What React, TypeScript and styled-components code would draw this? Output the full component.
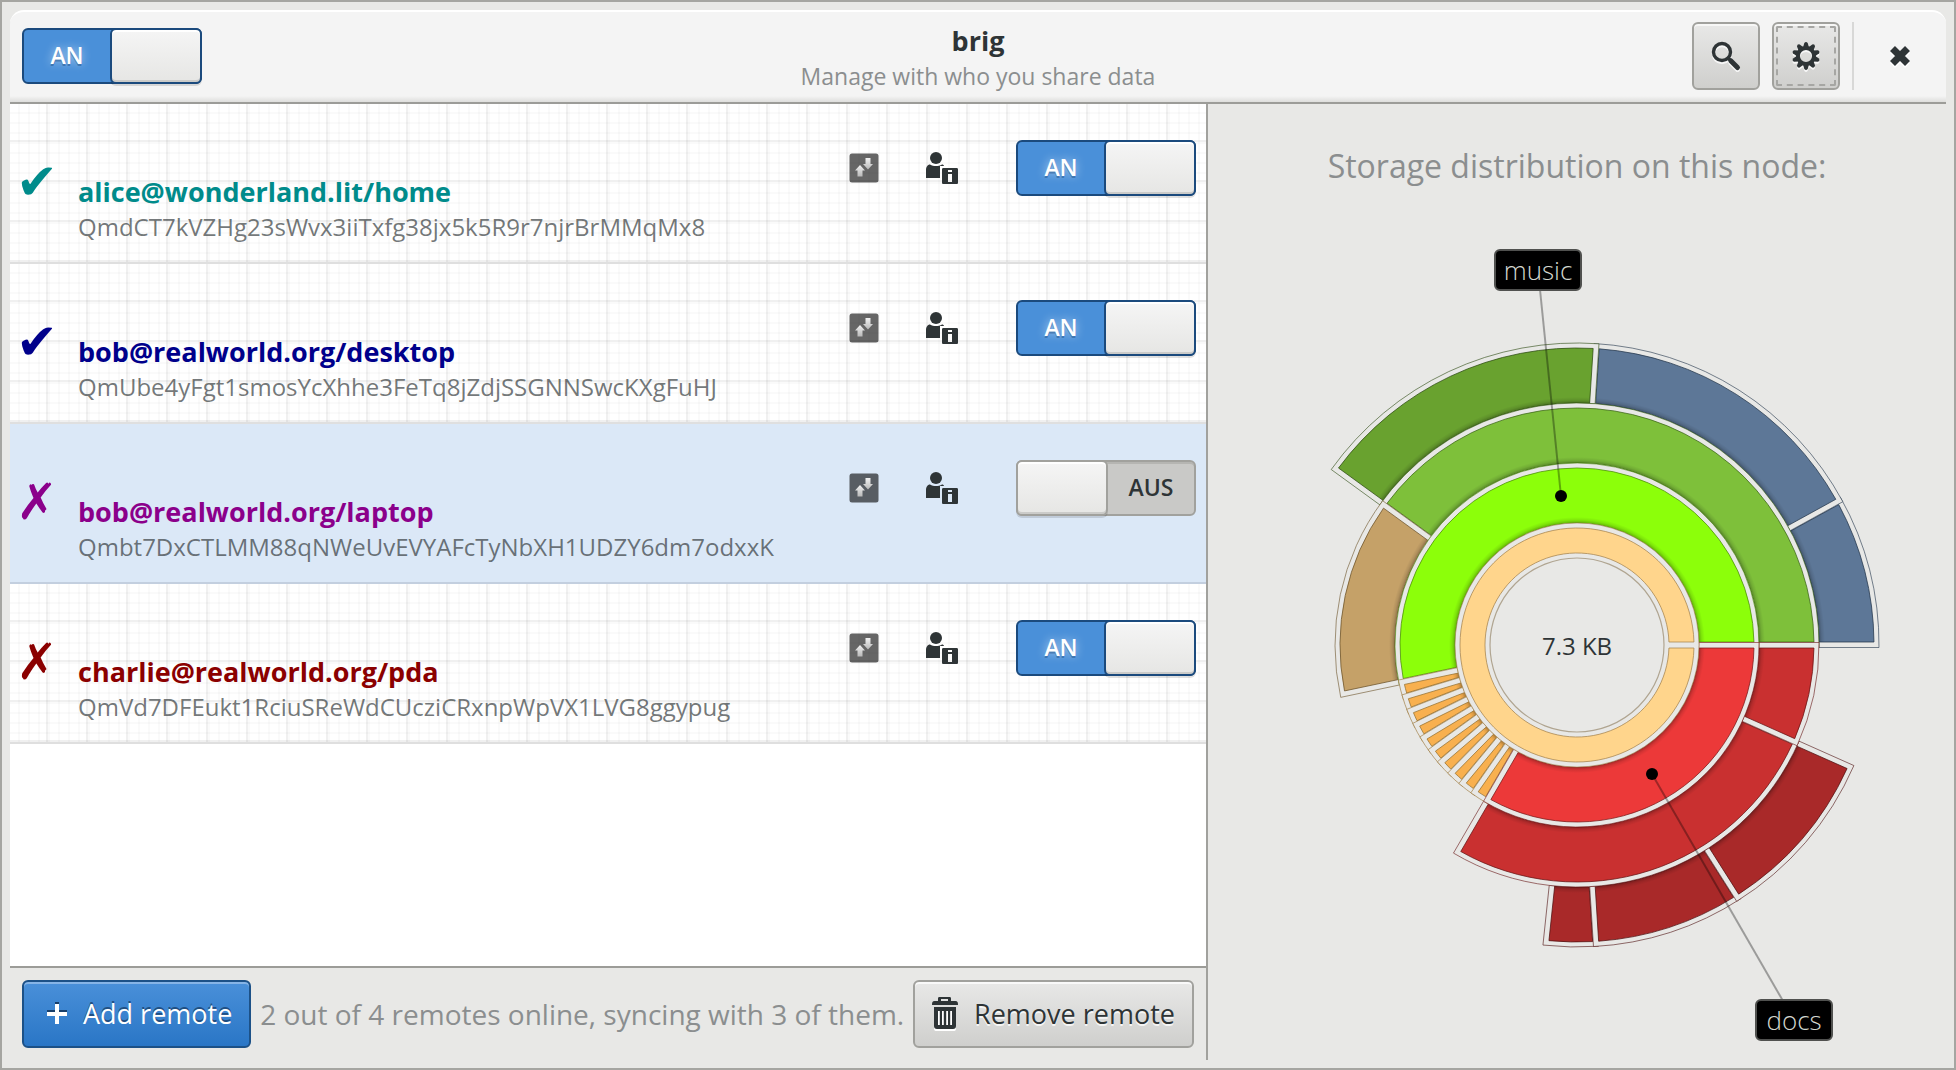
import React from "react";
import styled, { createGlobalStyle } from "styled-components";

const INK = "#2e3436";
const SURFACE = "#e8e8e6";
const LINE = "#a1a19d";

const GlobalStyle = createGlobalStyle`
  * { box-sizing: border-box; }
  body { margin: 0; background: ${SURFACE}; }
  body, button, input { font-family: "Open Sans", "Noto Sans", sans-serif; color: ${INK}; }
`;

const Window = styled.div`
  display: flex;
  flex-direction: column;
  min-height: 100vh;
  padding: 8px;
  border: 2px solid #a5a5a1;
  background: ${SURFACE};
`;

const HeaderBar = styled.header`
  display: grid;
  grid-template-columns: 1fr auto 1fr;
  align-items: center;
  height: 94px;
  padding: 0 12px 2px;
  border-top: 2px solid #ffffff;
  border-bottom: 2px solid #9c9c98;
  border-radius: 14px 14px 0 0;
  background: linear-gradient(to top, #dededc 0, #f4f4f4 6px);
`;

const TitleBlock = styled.div`
  display: flex;
  flex-direction: column;
  align-items: center;
  padding-top: 4px;
`;

const Title = styled.h1`
  margin: 0;
  font-size: 27px;
  line-height: 36px;
  font-weight: 700;
`;

const Subtitle = styled.p`
  margin: 0;
  color: #8b8e8f;
  font-size: 23px;
  line-height: 34px;
`;

const HeaderActions = styled.div`
  display: flex;
  justify-content: flex-end;
  gap: 12px;
`;

const IconButton = styled.button<{ $focused?: boolean; $flat?: boolean }>`
  display: flex;
  align-items: center;
  justify-content: center;
  width: 68px;
  height: 68px;
  padding: 0;
  border: 2px solid ${(p) => (p.$flat ? "transparent" : LINE)};
  border-radius: 6px;
  background: ${(p) => (p.$flat ? "none" : "linear-gradient(#e8e8e7, #cfcfcd)")};
  box-shadow: ${(p) => (p.$flat ? "none" : "inset 0 2px #f7f7f6")};
  outline: ${(p) => (p.$focused ? "2px dashed #a6a6a3" : "none")};
  outline-offset: -6px;
`;

const Separator = styled.span`
  width: 2px;
  background: #d8d8d7;
`;

const SwitchBox = styled.label<{ $on: boolean }>`
  display: flex;
  align-items: center;
  justify-content: ${(p) => (p.$on ? "flex-start" : "flex-end")};
  position: relative;
  width: 180px;
  height: 56px;
  border: 2px solid ${(p) => (p.$on ? "#1b4a7d" : LINE)};
  border-radius: 6px;
  background: ${(p) => (p.$on ? "#4a90d9" : "#c9c9c7")};
  box-shadow: ${(p) => (p.$on ? "none" : "inset 0 2px #b5b5b2")};
`;

const SwitchInput = styled.input`
  position: absolute;
  inset: 0;
  width: 100%;
  height: 100%;
  margin: 0;
  opacity: 0;
`;

const SwitchText = styled.span<{ $on: boolean }>`
  width: 86px;
  padding-bottom: 2px;
  text-align: center;
  font-size: 23px;
  line-height: 32px;
  font-weight: 600;
  color: ${(p) => (p.$on ? "#ffffff" : INK)};
  text-shadow: ${(p) =>
    p.$on ? "0 2px rgba(27, 74, 125, 0.45), 0 0 10px rgba(255, 255, 255, 0.6)" : "none"};
`;

const SwitchKnob = styled.span<{ $on: boolean }>`
  position: absolute;
  top: -2px;
  ${(p) => (p.$on ? "right" : "left")}: -2px;
  width: 92px;
  height: 56px;
  border: 2px solid ${(p) => (p.$on ? "#1b4a7d" : LINE)};
  border-radius: 6px;
  background: linear-gradient(#f5f5f5, #e6e6e4);
  box-shadow: inset 0 2px #ffffff, inset 0 -2px #cbcbc9, 0 2px rgba(0, 0, 0, 0.12);
`;

const Body = styled.main`
  display: grid;
  grid-template-columns: 599fr 369fr;
  flex: 1;
`;

const RemotesPane = styled.section`
  display: flex;
  flex-direction: column;
  border-right: 2px solid ${LINE};
`;

const RemoteList = styled.ul`
  flex: 1;
  margin: 0;
  padding: 0;
  list-style: none;
  background: #ffffff;
`;

const RemoteRow = styled.li<{ $selected: boolean }>`
  display: flex;
  align-items: flex-start;
  height: 160px;
  padding: 36px 10px 0 6px;
  border-bottom: 2px solid ${(p) => (p.$selected ? "#c3cfdf" : "#dfdfdf")};
  ${(p) =>
    p.$selected
      ? "background: #dbe8f7;"
      : `
  background-color: #ffffff;
  background-image:
    linear-gradient(rgba(0, 0, 0, 0.06) 2px, transparent 2px),
    linear-gradient(90deg, rgba(0, 0, 0, 0.06) 2px, transparent 2px),
    linear-gradient(rgba(0, 0, 0, 0.02) 2px, transparent 2px),
    linear-gradient(90deg, rgba(0, 0, 0, 0.02) 2px, transparent 2px);
  background-size: 40px 40px, 40px 40px, 10px 10px, 10px 10px;
  background-position: 36px 36px, 36px 36px, 8px 8px, 8px 8px;
  `}
`;

const StatusMark = styled.span<{ $color: string }>`
  width: 62px;
  padding-top: 14px;
  font-family: "DejaVu Sans", sans-serif;
  font-size: 50px;
  line-height: 56px;
  color: ${(p) => p.$color};
`;

const RemoteText = styled.div`
  flex: 1;
  padding-top: 34px;
`;

const RemoteName = styled.div<{ $color: string }>`
  font-size: 27px;
  line-height: 36px;
  font-weight: 700;
  color: ${(p) => p.$color};
`;

const RemoteId = styled.div`
  font-size: 24px;
  line-height: 34px;
  color: rgba(46, 52, 54, 0.68);
`;

const RowButton = styled.button`
  display: flex;
  align-items: center;
  justify-content: center;
  width: 78px;
  height: 56px;
  padding: 0;
  border: 0;
  background: none;
`;

const RowSwitch = styled.div`
  padding-left: 35px;
`;

const Footer = styled.footer`
  display: flex;
  align-items: center;
  justify-content: space-between;
  height: 94px;
  padding: 0 12px;
  border-top: 2px solid #9c9c98;
`;

const FooterButton = styled.button<{ $primary?: boolean }>`
  display: flex;
  align-items: center;
  height: 68px;
  padding: 0 17px;
  gap: 10px;
  border: 2px solid ${(p) => (p.$primary ? "#1c5187" : LINE)};
  border-radius: 6px;
  background: ${(p) =>
    p.$primary ? "linear-gradient(#4a90d9, #2a76c6)" : "linear-gradient(#e8e8e7, #cfcfcd)"};
  box-shadow: inset 0 2px ${(p) => (p.$primary ? "#86b4e6" : "#f9f9f9")};
  color: ${(p) => (p.$primary ? "#ffffff" : INK)};
  text-shadow: ${(p) => (p.$primary ? "0 -2px rgba(20, 55, 95, 0.7)" : "0 2px rgba(255, 255, 255, 0.75)")};
  font-size: 27px;
  line-height: 36px;
  white-space: nowrap;
`;

const FooterStatus = styled.p`
  margin: 0;
  color: #8b8e8f;
  font-size: 28px;
  line-height: 36px;
  white-space: nowrap;
`;

const ChartPane = styled.section`
  display: flex;
  flex-direction: column;
  align-items: center;
  padding-top: 38px;
`;

const ChartHeading = styled.h2`
  margin: 0;
  color: #8b8e8f;
  font-size: 32px;
  line-height: 48px;
  font-weight: 400;
`;

const ChartSvg = styled.svg`
  display: block;
  width: 100%;
  max-width: 738px;
  margin-top: 40px;
`;

const SearchIcon = () => (
  <svg width="32" height="32" viewBox="0 0 32 32" overflow="visible" aria-hidden="true">
    <g transform="translate(0 2)" stroke="#fff" fill="none" opacity=".8">
      <circle cx="12" cy="12" r="8.5" strokeWidth="3.4" />
      <path d="M21 21l6.500 6.500" strokeWidth="5" strokeLinecap="round" />
    </g>
    <g stroke={INK} fill="none">
      <circle cx="12" cy="12" r="8.5" strokeWidth="3.4" />
      <path d="M18 18l4 4" strokeWidth="3.500" />
      <path d="M21 21l6.500 6.500" strokeWidth="5" strokeLinecap="round" />
    </g>
  </svg>
);

const teeth = Array.from({ length: 10 }, (_, i) => i * 36);

const GearShape = ({ color }: { color: string }) => (
  <g fill="none" stroke={color}>
    <circle cx="16" cy="16" r="8" strokeWidth="3.8" />
    {teeth.map((a) => (
      <path key={a} d="M13 7.500L14.300 3Q16 1 17.700 3L19 7.500z" stroke="none" fill={color} transform={`rotate(${a} 16 16)`} />
    ))}
  </g>
);

const GearIcon = () => (
  <svg width="32" height="32" viewBox="0 0 32 32" overflow="visible" aria-hidden="true">
    <g transform="translate(0 2)" opacity=".8">
      <GearShape color="#fff" />
    </g>
    <GearShape color={INK} />
  </svg>
);

const CloseIcon = () => (
  <svg width="32" height="32" viewBox="0 0 32 32" aria-hidden="true">
    <path d="M8.5 10.5l15 15M23.5 10.5l-15 15" stroke="#fff" strokeWidth="7" />
    <path d="M8.5 8.500l15 15M23.5 8.500l-15 15" stroke={INK} strokeWidth="7" />
  </svg>
);

const SyncIcon = () => (
  <svg width="30" height="30" viewBox="0 0 30 30" aria-hidden="true">
    <defs>
      <linearGradient id="arrow" x1="0" y1="0" x2="0" y2="1">
        <stop offset="0" stopColor="#f2f2f2" />
        <stop offset="1" stopColor="#b8b8b8" />
      </linearGradient>
    </defs>
    <rect x=".5" y=".5" width="29" height="29" rx="2.500" fill="#000" fillOpacity=".6" />
    <path d="M11 12l5 5.500h-2.500v6h-5v-6H6z" fill="url(#arrow)" />
    <path d="M16.500 5h5v6H24l-5 5.500-5-5.500h2.500z" fill="url(#arrow)" />
  </svg>
);

const ContactIcon = () => (
  <svg width="32" height="32" viewBox="0 0 32 32" fill={INK} aria-hidden="true">
    <circle cx="10" cy="6" r="6" />
    <path d="M4 12.500c3.500 2 8.500 2 12 0 1 0 2 .7 2 1.500h-4v12H0v-8c0-3 1.500-5.500 4-5.500z" />
    <path fillRule="evenodd" d="M17.500 16h13c1 0 1.500.5 1.500 1.500v13c0 1-.5 1.500-1.500 1.500h-13c-1 0-1.500-.5-1.500-1.500v-13c0-1 .5-1.500 1.500-1.500zM22 18v2h4v-2zM22 22v8h4v-8z" />
  </svg>
);

const PlusIcon = () => (
  <svg width="32" height="32" viewBox="0 0 32 32" aria-hidden="true">
    <path d="M16 4v20M6 14h20" stroke="#173f6b" strokeWidth="4" />
    <path d="M16 6v20M6 16h20" stroke="#fff" strokeWidth="4" />
  </svg>
);

const TrashIcon = () => (
  <svg width="32" height="34" viewBox="1 0 32 34" aria-hidden="true">
    <path d="M3 12h22v20c0 1.500-1 2-2.500 2h-17C4 34 3 33.500 3 32z" fill="#fff" />
    <path
      fill={INK}
      fillRule="evenodd"
      d="M7 1.500C7 .5 7.500 0 8.500 0h10c1 0 1.500.5 1.500 1.500V4h4.500C26.500 4 27 5 27 8H1c0-3 .5-4 2.500-4H7zM10 2v2h7V2zM3 10h22v19c0 2-1 3-3 3H6c-2 0-3-1-3-3zM7 14v14h1.800V14zM11 14v14h1.800V14zM15.200 14v14H17V14zM19.200 14v14H21V14z"
    />
  </svg>
);

interface SwitchProps {
  on: boolean;
  label: string;
}

const Switch = ({ on, label }: SwitchProps) => (
  <SwitchBox $on={on}>
    <SwitchText $on={on}>{on ? "AN" : "AUS"}</SwitchText>
    <SwitchKnob $on={on} />
    <SwitchInput type="checkbox" role="switch" defaultChecked={on} aria-label={label} />
  </SwitchBox>
);

interface Remote {
  name: string;
  id: string;
  color: string;
  online: boolean;
  syncing: boolean;
  selected?: boolean;
}

const remotes: Remote[] = [
  { name: "alice@wonderland.lit/home", id: "QmdCT7kVZHg23sWvx3iiTxfg38jx5k5R9r7njrBrMMqMx8", color: "#008b8b", online: true, syncing: true },
  { name: "bob@realworld.org/desktop", id: "QmUbe4yFgt1smosYcXhhe3FeTq8jZdjSSGNNSwcKXgFuHJ", color: "#00008b", online: true, syncing: true },
  { name: "bob@realworld.org/laptop", id: "Qmbt7DxCTLMM88qNWeUvEVYAFcTyNbXH1UDZY6dm7odxxK", color: "#8b008b", online: false, syncing: false, selected: true },
  { name: "charlie@realworld.org/pda", id: "QmVd7DFEukt1RciuSReWdCUcziCRxnpWpVX1LVG8ggypug", color: "#8b0000", online: false, syncing: true },
];

interface Sector {
  ring: number;
  from: number;
  to: number;
  color: string;
  edge: string;
}

const files: Sector[] = Array.from({ length: 10 }, (_, i) => ({
  ring: 2,
  from: 120.1 + i * 4.8,
  to: 124.9 + i * 4.8,
  color: "#f8b04f",
  edge: "#96702f",
}));

const sectors: Sector[] = [
  { ring: 4, from: 331.2, to: 360, color: "#5d7797", edge: "#22344a" },
  { ring: 4, from: 273.7, to: 331.2, color: "#5d7797", edge: "#22344a" },
  { ring: 4, from: 216, to: 273.7, color: "#69a22f", edge: "#2b4a10" },
  { ring: 4, from: 86.4, to: 96, color: "#a92929", edge: "#4d0f0f" },
  { ring: 4, from: 57.6, to: 86.4, color: "#a92929", edge: "#4d0f0f" },
  { ring: 4, from: 24, to: 57.6, color: "#a92929", edge: "#4d0f0f" },
  { ring: 3, from: 216, to: 360, color: "#7ec03a", edge: "#3a6414" },
  { ring: 3, from: 168.1, to: 216, color: "#c5a168", edge: "#6b5228" },
  { ring: 3, from: 24, to: 120.1, color: "#c93030", edge: "#651414" },
  { ring: 3, from: 0, to: 24, color: "#c93030", edge: "#651414" },
  { ring: 2, from: 168.1, to: 360, color: "#8cff0a", edge: "#4a8a08" },
  ...files.reverse(),
  { ring: 2, from: 0, to: 120.1, color: "#ec3939", edge: "#7a1818" },
  { ring: 1, from: 0, to: 360, color: "#ffd58c", edge: "#a5834c" },
];

const CX = 369;
const CY = 415;
const SIDE = 3;
const INNER = [0, 92, 122, 182, 242];
const OUTER = [0, 117, 177, 237, 297];

const point = (r: number, deg: number) => {
  const a = (deg * Math.PI) / 180;
  return `${(CX + r * Math.cos(a)).toFixed(2)} ${(CY + r * Math.sin(a)).toFixed(2)}`;
};

/* Annular sector whose straight sides sit `inset` pixels inside the given angles. */
const sectorPath = (r0: number, r1: number, from: number, to: number, inset: number) => {
  const d0 = (Math.asin(inset / r0) * 180) / Math.PI;
  const d1 = (Math.asin(inset / r1) * 180) / Math.PI;
  const large = to - from > 180 ? 1 : 0;
  return [
    `M${point(r0, from + d0)}`,
    `L${point(r1, from + d1)}`,
    `A${r1} ${r1} 0 ${large} 1 ${point(r1, to - d1)}`,
    `L${point(r0, to - d0)}`,
    `A${r0} ${r0} 0 ${large} 0 ${point(r0, from + d0)}Z`,
  ].join("");
};

const SectorShape = ({ ring, from, to, color, edge }: Sector) => {
  const r0 = INNER[ring];
  const r1 = OUTER[ring];
  const whole = to - from === 360;
  return (
    <g>
      {whole ? (
        <circle cx={CX} cy={CY} r={r1 + 5} fill={SURFACE} stroke={edge} strokeOpacity=".6" />
      ) : (
        <path d={sectorPath(r0, r1 + 5, from, to, -2.5)} fill={SURFACE} stroke={edge} strokeOpacity=".6" />
      )}
      <path d={sectorPath(r0, r1, from, to, SIDE)} fill={color} />
      {ring > 1 && <path d={sectorPath(r0, r1, from, to, SIDE)} fill={`url(#shade${ring})`} />}
      <path d={sectorPath(r0, r1, from, to, SIDE)} fill="none" stroke={edge} strokeOpacity=".75" />
    </g>
  );
};

const Callout = ({ text, x, y, width, dotX, dotY }: { text: string; x: number; y: number; width: number; dotX: number; dotY: number }) => (
  <g>
    <path d={`M${x} ${y}L${dotX} ${dotY}`} stroke="#000" strokeOpacity=".33" strokeWidth="2" />
    <circle cx={dotX} cy={dotY} r="6" />
    <rect x={x - width / 2} y={y - 20} width={width} height="40" rx="5" fill="#000" stroke="#50514f" strokeWidth="2" />
    <text x={x} y={y + 10} textAnchor="middle" fontSize="26" fontFamily="Open Sans, Noto Sans, sans-serif" fontWeight="300" fill="#d3d7cf">
      {text}
    </text>
  </g>
);

const StorageChart = () => (
  <ChartSvg viewBox="0 0 738 830" role="img" aria-label="Storage distribution">
    <defs>
      {[2, 3, 4].map((ring) => (
        <radialGradient key={ring} id={`shade${ring}`} gradientUnits="userSpaceOnUse" cx={CX} cy={CY} r={OUTER[ring]}>
          <stop offset={INNER[ring] / OUTER[ring]} stopColor="#000" stopOpacity=".3" />
          <stop offset={(INNER[ring] + 3) / OUTER[ring]} stopColor="#000" stopOpacity=".1" />
          <stop offset={(INNER[ring] + 6) / OUTER[ring]} stopColor="#000" stopOpacity="0" />
        </radialGradient>
      ))}
    </defs>
    {sectors.map((s) => (
      <SectorShape key={`${s.ring}-${s.from}`} {...s} />
    ))}
    <circle cx={CX} cy={CY} r="87" fill="none" stroke="#b0a591" strokeWidth="1.200" />
    <text x={CX} y={CY + 10} textAnchor="middle" fontSize="24" fontFamily="Open Sans, Noto Sans, sans-serif" fill={INK}>
      7.3 KB
    </text>
    <Callout text="music" x={330} y={40} width={86} dotX={353} dotY={266} />
    <Callout text="docs" x={586} y={790} width={76} dotX={444} dotY={544} />
  </ChartSvg>
);

export default function App() {
  return (
    <>
      <GlobalStyle />
      <Window>
        <HeaderBar>
          <Switch on label="Sharing" />
          <TitleBlock>
            <Title>brig</Title>
            <Subtitle>Manage with who you share data</Subtitle>
          </TitleBlock>
          <HeaderActions>
            <IconButton aria-label="Search"><SearchIcon /></IconButton>
            <IconButton aria-label="Settings" $focused><GearIcon /></IconButton>
            <Separator />
            <IconButton aria-label="Close" $flat><CloseIcon /></IconButton>
          </HeaderActions>
        </HeaderBar>
        <Body>
          <RemotesPane>
            <RemoteList>
              {remotes.map((r) => (
                <RemoteRow key={r.name} $selected={!!r.selected}>
                  <StatusMark $color={r.color}>{r.online ? "✔" : "✗"}</StatusMark>
                  <RemoteText>
                    <RemoteName $color={r.color}>{r.name}</RemoteName>
                    <RemoteId>{r.id}</RemoteId>
                  </RemoteText>
                  <RowButton aria-label={`Sync ${r.name}`}><SyncIcon /></RowButton>
                  <RowButton aria-label={`Details of ${r.name}`}><ContactIcon /></RowButton>
                  <RowSwitch>
                    <Switch on={r.syncing} label={`Share with ${r.name}`} />
                  </RowSwitch>
                </RemoteRow>
              ))}
            </RemoteList>
            <Footer>
              <FooterButton $primary><PlusIcon />Add remote</FooterButton>
              <FooterStatus>2 out of 4 remotes online, syncing with 3 of them.</FooterStatus>
              <FooterButton><TrashIcon />Remove remote</FooterButton>
            </Footer>
          </RemotesPane>
          <ChartPane>
            <ChartHeading>Storage distribution on this node:</ChartHeading>
            <StorageChart />
          </ChartPane>
        </Body>
      </Window>
    </>
  );
}
